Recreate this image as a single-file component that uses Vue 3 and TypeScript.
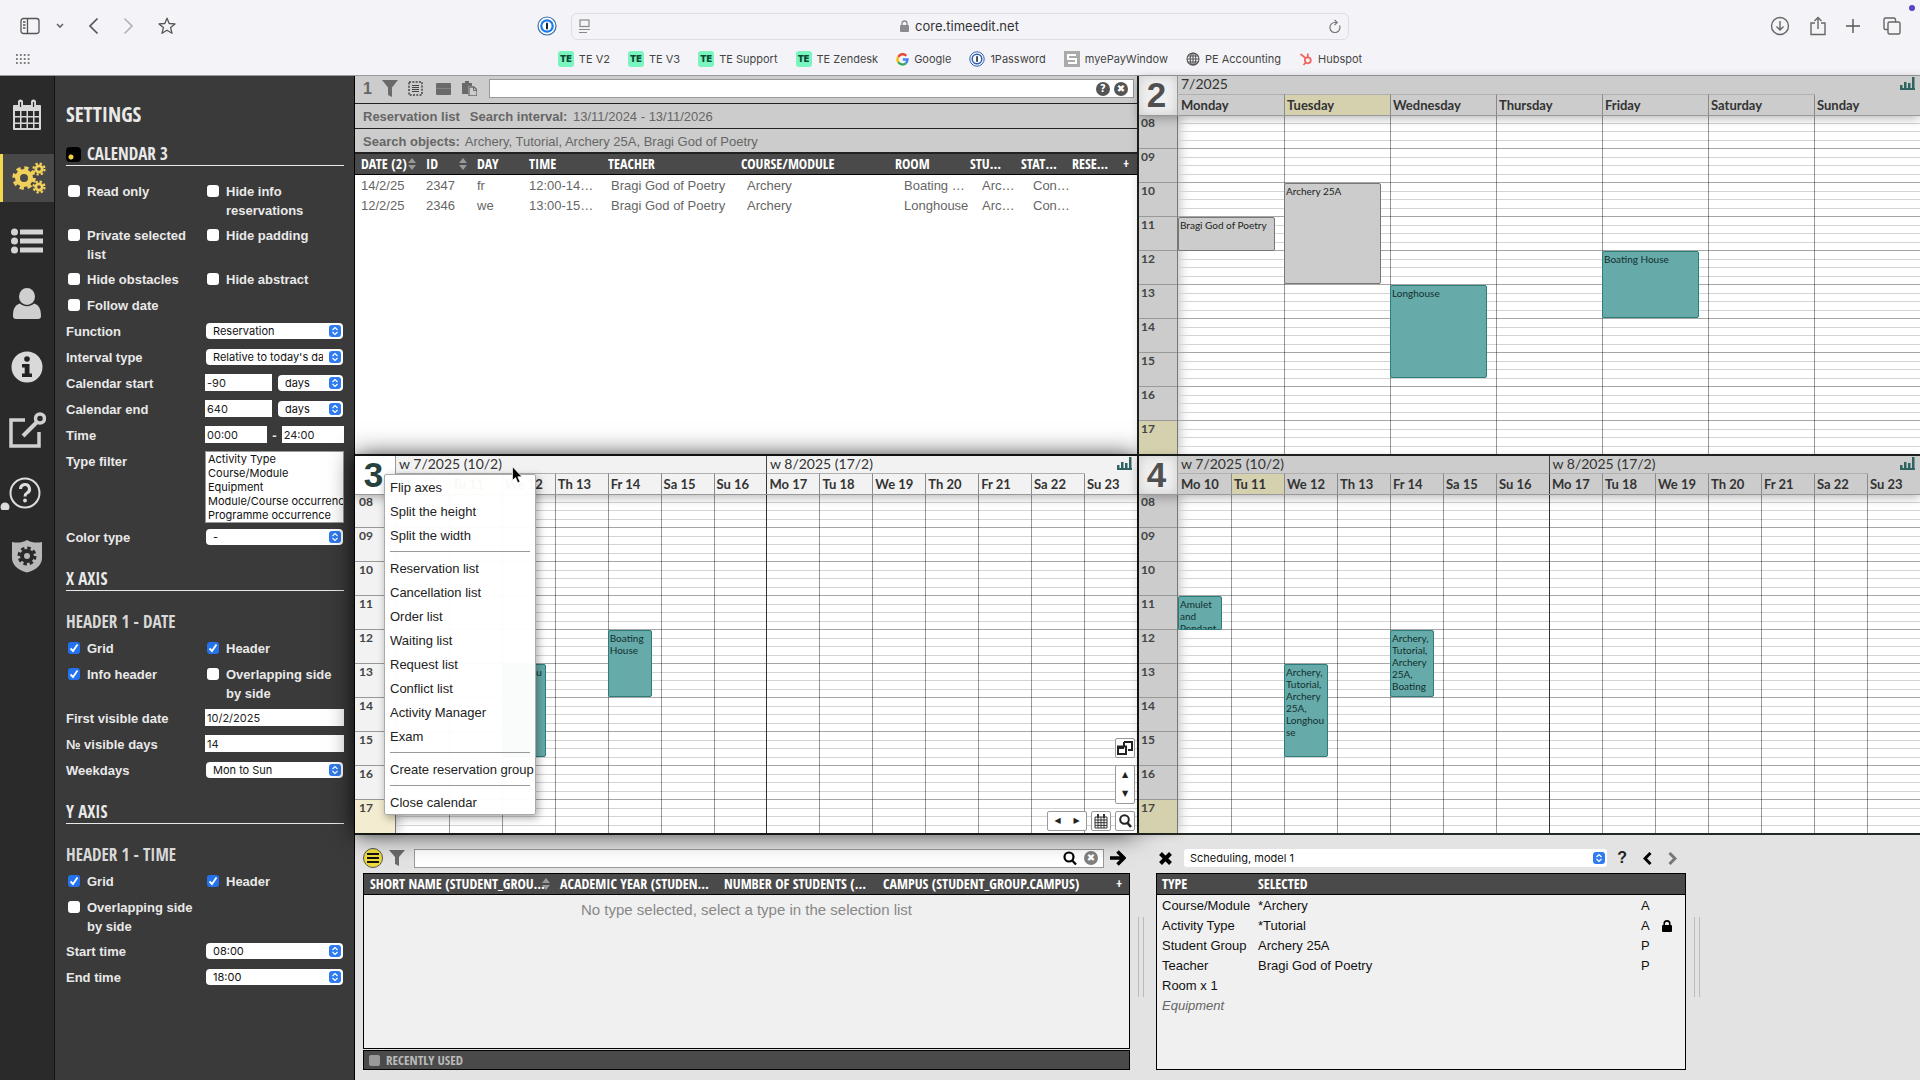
<script setup lang="ts">
interface CalEvent { day: number; start: number; end: number; text: string; grey?: boolean }
interface Calendar {
  num: number
  tone: string
  weeks: string[]
  days: string[]
  today: number
  events: CalEvent[]
}

const hours = ['08', '09', '10', '11', '12', '13', '14', '15', '16', '17']
const twoWeeks = ['Mo 10', 'Tu 11', 'We 12', 'Th 13', 'Fr 14', 'Sa 15', 'Su 16', 'Mo 17', 'Tu 18', 'We 19', 'Th 20', 'Fr 21', 'Sa 22', 'Su 23']
const weekPair = ['w 7/2025 (10/2)', 'w 8/2025 (17/2)']

const calendars: Calendar[] = [
  {
    num: 2, tone: 'dim single', weeks: ['7/2025'],
    days: ['Monday', 'Tuesday', 'Wednesday', 'Thursday', 'Friday', 'Saturday', 'Sunday'], today: 1,
    events: [
      { day: 0, start: 11, end: 12, text: 'Bragi God of Poetry', grey: true },
      { day: 1, start: 10, end: 13, text: 'Archery 25A', grey: true },
      { day: 2, start: 13, end: 15.75, text: 'Longhouse' },
      { day: 4, start: 12, end: 14, text: 'Boating House' },
    ],
  },
  {
    num: 3, tone: 'active', weeks: weekPair, days: twoWeeks, today: 1,
    events: [
      { day: 2, start: 13, end: 15.75, text: 'Longhouse' },
      { day: 4, start: 12, end: 14, text: 'Boating House' },
    ],
  },
  {
    num: 4, tone: 'dim', weeks: weekPair, days: twoWeeks, today: 1,
    events: [
      { day: 0, start: 11, end: 12, text: 'Amulet and Pendant' },
      { day: 2, start: 13, end: 15.75, text: 'Archery, Tutorial, Archery 25A, Longhouse' },
      { day: 4, start: 12, end: 14, text: 'Archery, Tutorial, Archery 25A, Boating' },
    ],
  },
]

function place(e: CalEvent) {
  return { top: (e.start - 8) * 10 + '%', height: (e.end - e.start) * 10 + '%' }
}

const menu = [
  ['Flip axes', 'Split the height', 'Split the width'],
  ['Reservation list', 'Cancellation list', 'Order list', 'Waiting list', 'Request list', 'Conflict list', 'Activity Manager', 'Exam'],
  ['Create reservation group'],
  ['Close calendar'],
]

const reservations = [
  ['14/2/25', '2347', 'fr', '12:00-14…', 'Bragi God of Poetry', 'Archery', 'Boating …', 'Arc…', 'Con…', ''],
  ['12/2/25', '2346', 'we', '13:00-15…', 'Bragi God of Poetry', 'Archery', 'Longhouse', 'Arc…', 'Con…', ''],
]

const selection = [
  { type: 'Course/Module', value: '*Archery', flag: 'A' },
  { type: 'Activity Type', value: '*Tutorial', flag: 'A', locked: true },
  { type: 'Student Group', value: 'Archery 25A', flag: 'P' },
  { type: 'Teacher', value: 'Bragi God of Poetry', flag: 'P' },
  { type: 'Room x 1', value: '', flag: '' },
  { type: 'Equipment', value: '', flag: '', optional: true },
]

const bookmarks = [
  { icon: 'te', label: 'TE V2' },
  { icon: 'te', label: 'TE V3' },
  { icon: 'te', label: 'TE Support' },
  { icon: 'te', label: 'TE Zendesk' },
  { icon: 'google', label: 'Google' },
  { icon: 'onepw', label: '1Password' },
  { icon: 'pay', label: 'myePayWindow' },
  { icon: 'globe', label: 'PE Accounting' },
  { icon: 'hub', label: 'Hubspot' },
]

const flags = [
  { id: 'ro', label: 'Read only' }, { id: 'hi', label: 'Hide info reservations' },
  { id: 'ps', label: 'Private selected list' }, { id: 'hp', label: 'Hide padding' },
  { id: 'ho', label: 'Hide obstacles' }, { id: 'ha', label: 'Hide abstract' },
  { id: 'fd', label: 'Follow date' },
]
const xFlags = [
  { id: 'xg', label: 'Grid', on: true }, { id: 'xh', label: 'Header', on: true },
  { id: 'xi', label: 'Info header', on: true }, { id: 'xo', label: 'Overlapping side by side', on: false },
]
const yFlags = [
  { id: 'yg', label: 'Grid', on: true }, { id: 'yh', label: 'Header', on: true },
  { id: 'yo', label: 'Overlapping side by side', on: false },
]
const typeFilter = ['Activity Type', 'Course/Module', 'Equipment', 'Module/Course occurrence', 'Programme occurrence']
</script>

<template>
  <div class="page">
    <header class="browser">
      <div class="bar">
        <div class="bar-left">
          <button class="ib sidebar-btn" aria-label="Sidebar">
            <svg width="20" height="18" viewBox="0 0 20 18" fill="none" stroke="#555" stroke-width="1.3"><rect x="1" y="1.5" width="18" height="15" rx="2.5" /><path d="M7.5 1.5v15M3 5h2.500M3 8h2.500M3 11h2.500" /></svg>
          </button>
          <button class="ib" aria-label="Tab groups"><svg width="8" height="6" viewBox="0 0 8 6" fill="none" stroke="#666" stroke-width="1.6"><path d="M1 1l3 3 3-3" /></svg></button>
          <button class="ib" aria-label="Back"><svg width="11" height="18" viewBox="0 0 11 18" fill="none" stroke="#555" stroke-width="1.700"><path d="M9.500 1.500L2 9l7.500 7.500" /></svg></button>
          <button class="ib" aria-label="Forward"><svg width="11" height="18" viewBox="0 0 11 18" fill="none" stroke="#b4b4b8" stroke-width="1.700"><path d="M1.500 1.500L9 9l-7.500 7.500" /></svg></button>
          <button class="ib" aria-label="Favourites"><svg width="18" height="18" viewBox="0 0 18 18" fill="none" stroke="#555" stroke-width="1.3" stroke-linejoin="round"><path d="M9 1.200l2.200 5.300 5.800.4-4.400 3.700 1.400 5.700L9 13.200l-5 3.100 1.400-5.700L1 6.900l5.800-.4z" /></svg></button>
          <button class="ib onepw-btn" aria-label="1Password"><svg width="20" height="20" viewBox="0 0 20 20"><circle cx="10" cy="10" r="9" fill="#fff" stroke="#3a6ea5" stroke-width="1.2" /><circle cx="10" cy="10" r="6.800" fill="#1a7cf0" /><circle cx="10" cy="10" r="4.600" fill="#fff" /><rect x="9" y="6.500" width="2" height="7" rx="1" fill="#123" /></svg></button>
        </div>
        <div class="address">
          <svg width="11" height="15" viewBox="0 0 11 15" fill="none" stroke="#888" stroke-width="1.200"><rect x="1" y="1" width="9" height="6.500" /><path d="M0 10.500h11M0 13.500h8" /></svg>
          <span class="url"><svg width="9" height="12" viewBox="0 0 9 12"><rect x="0" y="5" width="9" height="7" rx="1" fill="#8b8b8f" /><path d="M2 5.500V3.500a2.500 2.500 0 0 1 5 0v2" fill="none" stroke="#8b8b8f" stroke-width="1.300" /></svg>core.timeedit.net</span>
          <svg width="12" height="15" viewBox="0 0 12 15" fill="none" stroke="#777" stroke-width="1.200"><path d="M10.500 6.500A5 5 0 1 1 6 3.500h1.500M5.500.8L8.200 3.500 5.500 6.200" /></svg>
        </div>
        <div class="bar-right">
          <svg width="20" height="20" viewBox="0 0 20 20" fill="none" stroke="#666" stroke-width="1.400"><circle cx="10" cy="10" r="8.500" /><path d="M10 5v9M6.500 10.500L10 14l3.500-3.500" /></svg>
          <svg width="16" height="20" viewBox="0 0 16 20" fill="none" stroke="#666" stroke-width="1.400"><path d="M5 7H1v11.500h14V7h-4M8 13V1.500M4.500 5L8 1.500 11.500 5" /></svg>
          <svg class="plus" width="14" height="14" viewBox="0 0 14 14" fill="none" stroke="#555" stroke-width="1.400"><path d="M7 0v14M0 7h14" /></svg>
          <svg width="18" height="18" viewBox="0 0 18 18" fill="none" stroke="#666" stroke-width="1.400"><path d="M5 12.500H2.500A1.500 1.500 0 0 1 1 11V2.500A1.500 1.500 0 0 1 2.500 1H11a1.500 1.500 0 0 1 1.500 1.500V5" /><rect x="5" y="5" width="12" height="12" rx="1.500" /></svg>
        </div>
        <i class="rec-dot"></i>
      </div>
      <nav class="bookmarks">
        <svg class="dots" width="14" height="10" viewBox="0 0 14 10" fill="none" stroke="#555" stroke-width="1.600" stroke-dasharray="1.800 2.100"><path d="M0 1h14M0 5h14M0 9h14" /></svg>
        <a v-for="b in bookmarks" :key="b.label" href="#" class="bm">
          <span v-if="b.icon === 'te'" class="te">TE</span>
          <svg v-else-if="b.icon === 'google'" width="13" height="13" viewBox="0 0 13 13" fill="none" stroke-width="2.400"><path d="M10.300 2.800A5 5 0 0 0 2.300 3.800" stroke="#ea4335" /><path d="M2.300 3.800a5 5 0 0 0 0 5.400" stroke="#fbbc05" /><path d="M2.300 9.200a5 5 0 0 0 7.400 1.100" stroke="#34a853" /><path d="M9.700 10.300A5 5 0 0 0 11.500 6.500H6.800" stroke="#4285f4" /></svg>
          <svg v-else-if="b.icon === 'onepw'" width="16" height="16" viewBox="0 0 16 16"><circle cx="8" cy="8" r="7.200" fill="#fff" stroke="#2f5fb0" /><circle cx="8" cy="8" r="4.800" fill="#fff" stroke="#2f5fb0" stroke-width="1.500" /><rect x="7.200" y="5" width="1.700" height="6" rx=".8" fill="#234" /></svg>
          <svg v-else-if="b.icon === 'pay'" width="16" height="16" viewBox="0 0 16 16"><rect width="16" height="16" fill="#aaa" /><path d="M12 4H4v4h8v4H4" fill="none" stroke="#fff" stroke-width="2" /></svg>
          <svg v-else-if="b.icon === 'globe'" width="14" height="14" viewBox="0 0 14 14" fill="none" stroke="#555" stroke-width="1.100"><circle cx="7" cy="7" r="6" /><ellipse cx="7" cy="7" rx="2.800" ry="6" /><path d="M7 1v12M1 7h12M2 4h10M2 10h10" /></svg>
          <svg v-else width="14" height="14" viewBox="0 0 14 14" fill="none" stroke="#f2625a" stroke-width="1.700"><circle cx="8.800" cy="8.300" r="3" /><path d="M8.800 5.300V1.500M6.600 6.200L1.500 2M6.700 10.500L4.500 13" /></svg>
          {{ b.label }}
        </a>
      </nav>
    </header>

    <div class="app">
      <nav class="rail">
        <button aria-label="Calendar"><svg width="30" height="32" viewBox="0 0 30 32"><path d="M2 6h4V3a2.500 2.500 0 0 1 5 0v3h8V3a2.500 2.500 0 0 1 5 0v3h4a1 1 0 0 1 1 1v23a1 1 0 0 1-1 1H2a1 1 0 0 1-1-1V7a1 1 0 0 1 1-1z" fill="#d8d8d8" /><path d="M8.500 3v5M21.500 3v5" stroke="#2a2a2a" stroke-width="1.200" /><g fill="#2a2a2a"><path d="M3 12h5v5H3zM9.500 12h5v5h-5zM16 12h5v5h-5zM22.500 12h4.500v5h-4.500zM3 18.500h5v5H3zM9.500 18.500h5v5h-5zM16 18.500h5v5h-5zM22.500 18.500h4.500v5h-4.500zM3 25h5v4H3zM9.500 25h5v4h-5zM16 25h5v4h-5zM22.500 25h4.500v4h-4.500z" /></g></svg></button>
        <button class="on" aria-label="Settings"><svg width="34" height="32" viewBox="0 0 34 32" fill="none" stroke="#f0cf5a"><circle cx="12" cy="16" r="6.500" stroke-width="5" /><circle cx="12" cy="16" r="10" stroke-width="3.500" stroke-dasharray="4.200 3.654" /><circle cx="27" cy="7" r="3.200" stroke-width="2.800" /><circle cx="27" cy="7" r="5.500" stroke-width="2.200" stroke-dasharray="2.300 2.020" /><circle cx="27" cy="25" r="3.200" stroke-width="2.800" /><circle cx="27" cy="25" r="5.500" stroke-width="2.200" stroke-dasharray="2.300 2.020" /></svg></button>
        <button aria-label="Lists"><svg width="32" height="26" viewBox="0 0 32 26" fill="#d4d4d4"><circle cx="3.500" cy="4" r="3.500" /><circle cx="3.500" cy="13" r="3.500" /><circle cx="3.500" cy="22" r="3.500" /><path d="M9 1.500h23v5H9zM9 10.500h23v5H9zM9 19.500h23v5H9z" /></svg></button>
        <button aria-label="User"><svg width="30" height="32" viewBox="0 0 30 32" fill="#cfcfcf"><ellipse cx="15" cy="8.500" rx="8" ry="8.500" /><path d="M1 28c0-7 2-11 7-12.500 4 3.500 10 3.500 14 0 5 1.500 7 5.500 7 12.500 0 2-1 3-3 3H4c-2 0-3-1-3-3z" /></svg></button>
        <button aria-label="Information"><svg width="32" height="32" viewBox="0 0 32 32"><circle cx="16" cy="16" r="15.500" fill="#d9d9d9" /><circle cx="16" cy="8" r="2.800" fill="#222" /><path d="M11 13h7.500v9.500H21V26H11v-3.500h2.700v-6H11z" fill="#222" /></svg></button>
        <button aria-label="Open externally"><svg width="38" height="38" viewBox="0 0 38 38" fill="none" stroke="#d0d0d0" stroke-width="3.500"><path d="M17 9H3v26h28V21" /><path d="M15 25L29 11" stroke-width="4" /><circle cx="32" cy="7.500" r="4.500" /></svg></button>
        <button class="help" aria-label="Help"><svg width="42" height="34" viewBox="0 0 42 34" fill="none"><circle cx="25" cy="17" r="14.500" stroke="#ddd" stroke-width="2" /><path d="M20.500 13a4.500 4.500 0 1 1 6.500 4c-1.500.8-2 1.500-2 3.500" stroke="#ddd" stroke-width="3" /><circle cx="25" cy="24.500" r="1.900" fill="#ddd" /><circle cx="5" cy="31" r="4.500" fill="#ddd" /></svg></button>
        <button aria-label="Admin"><svg width="32" height="34" viewBox="0 0 32 34"><path d="M1 3c5 1 10 1 15-2 5 3 10 3 15 2v16c0 7-6 12-15 14.500C7 31 1 26 1 19z" fill="#b8b8b8" /><circle cx="16" cy="17" r="5" fill="none" stroke="#2a2a2a" stroke-width="4" /><circle cx="16" cy="17" r="8" fill="none" stroke="#2a2a2a" stroke-width="3" stroke-dasharray="3.500 2.783" /></svg></button>
      </nav>

      <aside class="settings">
        <h1>SETTINGS</h1>
        <h2><i class="cal-badge"></i>CALENDAR 3</h2>
        <div class="form">
          <label v-for="f in flags" :key="f.id" class="check" :for="f.id"><input :id="f.id" type="checkbox" /><span>{{ f.label }}</span></label>
          <i></i>
          <label for="func">Function</label><select id="func"><option>Reservation</option></select>
          <label for="itype">Interval type</label><select id="itype"><option>Relative to today's date</option></select>
          <label for="cs">Calendar start</label><div class="pair"><input id="cs" type="text" value="-90" /><select aria-label="Start unit"><option>days</option></select></div>
          <label for="ce">Calendar end</label><div class="pair"><input id="ce" type="text" value="640" /><select aria-label="End unit"><option>days</option></select></div>
          <label for="tf">Time</label><div class="pair times"><input id="tf" type="text" value="00:00" /><span>-</span><input type="text" value="24:00" aria-label="Time to" /></div>
          <label for="filter">Type filter</label>
          <select id="filter" class="listbox" multiple size="5"><option v-for="t in typeFilter" :key="t">{{ t }}</option></select>
          <label for="ct">Color type</label><select id="ct"><option>-</option></select>
        </div>
        <h2>X AXIS</h2>
        <h3>HEADER 1 - DATE</h3>
        <div class="form">
          <label v-for="f in xFlags" :key="f.id" class="check" :for="f.id"><input :id="f.id" type="checkbox" :checked="f.on" /><span>{{ f.label }}</span></label>
          <label for="fv">First visible date</label><input id="fv" type="text" value="10/2/2025" />
          <label for="nv">№ visible days</label><input id="nv" type="text" value="14" />
          <label for="wd">Weekdays</label><select id="wd"><option>Mon to Sun</option></select>
        </div>
        <h2>Y AXIS</h2>
        <h3>HEADER 1 - TIME</h3>
        <div class="form">
          <label v-for="f in yFlags" :key="f.id" class="check" :for="f.id"><input :id="f.id" type="checkbox" :checked="f.on" /><span>{{ f.label }}</span></label>
          <i></i>
          <label for="st">Start time</label><select id="st"><option>08:00</option></select>
          <label for="et">End time</label><select id="et"><option>18:00</option></select>
        </div>
      </aside>

      <main class="work">
        <div class="panels">
          <section class="list-panel">
            <div class="tools">
              <b>1</b>
              <svg width="16" height="17" viewBox="0 0 16 17" fill="#6a6a6a"><path d="M0 0h16L10 7.500V17l-4-2V7.500z" /></svg>
              <svg width="15" height="15" viewBox="0 0 15 15" fill="none" stroke="#444"><rect x="1" y="1" width="13" height="13" stroke-width="1.500" stroke-dasharray="2 1.300" /><path d="M4 4.500h7M4 6.500h7M4 8.500h7M4 10.500h7" /></svg>
              <svg class="gap" width="15" height="12" viewBox="0 0 15 12" fill="#6a6a6a"><rect width="15" height="5.500" rx="1" /><rect y="5" width="15" height="7" rx="1" /><path d="M1 5.500h13" stroke="#8a8a8a" stroke-width=".8" /></svg>
              <svg width="15" height="15" viewBox="0 0 15 15"><path d="M0 2h3V0h4v2h3v3H6v8H0z" fill="#6a6a6a" /><path d="M7 6h5l3 3v6H7z" fill="#cbcccb" stroke="#6a6a6a" stroke-width="1.300" /><path d="M11.500 6v3.500H15" fill="none" stroke="#6a6a6a" /></svg>
              <div class="search">
                <input type="text" aria-label="Search" />
                <span class="dot">?</span>
                <span class="dot">✖</span>
              </div>
            </div>
            <p class="info"><b>Reservation list</b><b>Search interval:</b> 13/11/2024 - 13/11/2026</p>
            <p class="info last"><b>Search objects:</b> Archery, Tutorial, Archery 25A, Bragi God of Poetry</p>
            <table class="res">
              <colgroup><col style="width: 65px" /><col style="width: 51px" /><col style="width: 52px" /><col style="width: 79px" /><col style="width: 133px" /><col /><col style="width: 75px" /><col style="width: 51px" /><col style="width: 51px" /><col style="width: 52px" /><col style="width: 19px" /></colgroup>
              <thead><tr>
                <th>DATE (2)<svg class="sort" width="8" height="12" viewBox="0 0 8 12"><path d="M4 0l4 5H0zM0 7h8l-4 5z" /></svg></th>
                <th>ID<svg class="sort" width="8" height="12" viewBox="0 0 8 12"><path d="M4 0l4 5H0zM0 7h8l-4 5z" /></svg></th>
                <th>DAY</th><th>TIME</th><th>TEACHER</th><th>COURSE/MODULE</th><th>ROOM</th><th>STU…</th><th>STAT…</th><th>RESE…</th><th>+</th>
              </tr></thead>
              <tbody><tr v-for="r in reservations" :key="r[1]"><td v-for="(c, i) in r" :key="i" :class="'c' + i">{{ c }}</td><td></td></tr></tbody>
            </table>
          </section>

          <section v-for="cal in calendars" :key="cal.num" class="cal" :class="cal.tone">
            <div class="cal-head">
              <div class="num">{{ cal.num }}</div>
              <div class="heads">
                <div class="weeks">
                  <span v-for="w in cal.weeks" :key="w">{{ w }}</span>
                  <svg class="bars" width="15" height="13" viewBox="0 0 15 13" fill="#2f6460"><path d="M0 8h2.500v4H0zM4 5h2.500v7H4zM8 6h2.500v6H8zM12 0h2.500v12H12zM0 11h15v2H0z" /></svg>
                </div>
                <div class="days">
                  <span v-for="(d, i) in cal.days" :key="d" :class="{ today: i === cal.today, monday: i === 7 }">{{ d }}</span>
                </div>
              </div>
            </div>
            <div class="cal-body">
              <div class="axis"><span v-for="h in hours" :key="h" :class="{ now: h === '17' }">{{ h }}</span></div>
              <div class="grid">
                <div class="lines"><i v-for="n in 40" :key="n"></i></div>
                <div class="cols">
                  <div v-for="(d, i) in cal.days" :key="d" :class="{ monday: i === 7 }">
                    <article v-for="e in cal.events.filter(x => x.day === i)" :key="e.text" class="ev" :class="{ grey: e.grey }" :style="place(e)"><p>{{ e.text }}</p></article>
                  </div>
                </div>
              </div>
            </div>
            <template v-if="cal.num === 3">
              <div class="controls">
                <button class="sq" aria-label="Windows"><svg width="16" height="14" viewBox="0 0 16 14" fill="none" stroke="#222" stroke-width="2"><path d="M7 1h8v8h-4M7 1v4" /><path d="M1 5.500h8v7.500H1z" fill="#fff" /><path d="M1 7h5V5" /></svg></button>
                <div class="vert"><button aria-label="Up">▲</button><button aria-label="Down">▼</button></div>
                <div class="bottom">
                  <div class="horiz"><button aria-label="Previous">◀</button><button aria-label="Next">▶</button></div>
                  <button class="sq" aria-label="Pick date"><svg width="14" height="15" viewBox="0 0 14 15" fill="none" stroke="#333"><path d="M1 3h12v11H1zM1 6h12M1 8.700h12M1 11.400h12M4 3v11M7 3v11M10 3v11" /><path d="M4 0v4M10 0v4" stroke-width="2" /></svg></button>
                  <button class="sq" aria-label="Zoom"><svg width="13" height="14" viewBox="0 0 13 14" fill="none" stroke="#222" stroke-width="2"><circle cx="5.500" cy="5.500" r="4.300" /><path d="M8.500 9l3.500 4" stroke-width="2.500" /></svg></button>
                </div>
              </div>
              <div class="menu" role="menu">
                <template v-for="(group, g) in menu" :key="g">
                  <hr v-if="g > 0" />
                  <button v-for="m in group" :key="m" role="menuitem">{{ m }}</button>
                </template>
              </div>
              <svg class="cursor" width="11" height="18" viewBox="0 0 11 18"><path d="M.5.8v13.500l3-2.800 2.300 5.300 2.200-1-2.200-5h4.200z" fill="#000" stroke="#fff" stroke-width=".7" /></svg>
            </template>
          </section>
        </div>

        <div class="dock">
          <section class="objects">
            <div class="dock-bar">
              <button class="round" aria-label="Menu"><svg width="12" height="10" viewBox="0 0 12 10" stroke="#111" stroke-width="2"><path d="M0 1h12M0 5h12M0 9h12" /></svg></button>
              <svg width="16" height="16" viewBox="0 0 16 16" fill="#6a6a6a"><path d="M0 0h16L10 7v9l-4-2V7z" /></svg>
              <div class="search tall">
                <input type="text" aria-label="Search objects" />
                <svg width="14" height="14" viewBox="0 0 14 14" fill="none" stroke="#000" stroke-width="2.200"><circle cx="6" cy="6" r="4.500" /><path d="M9.200 9.500L13 13.500" /></svg>
                <span class="dot pale">✖</span>
              </div>
              <button class="ib" aria-label="Go"><svg width="16" height="16" viewBox="0 0 16 16" fill="none" stroke="#000" stroke-width="3.400"><path d="M0 8h13M7.500 1.500L14 8l-6.500 6.500" /></svg></button>
            </div>
            <div class="box">
              <table class="objs">
                <colgroup><col style="width: 190px" /><col style="width: 164px" /><col style="width: 159px" /><col /><col style="width: 18px" /></colgroup>
                <thead><tr>
                  <th>SHORT NAME (STUDENT_GROU…<svg class="sort" width="8" height="12" viewBox="0 0 8 12"><path d="M4 0l4 5H0zM0 7h8l-4 5z" /></svg></th>
                  <th>ACADEMIC YEAR (STUDEN…</th><th>NUMBER OF STUDENTS (…</th><th>CAMPUS (STUDENT_GROUP.CAMPUS)</th><th>+</th>
                </tr></thead>
              </table>
              <p class="empty">No type selected, select a type in the selection list</p>
            </div>
            <div class="recent"><i></i>RECENTLY USED</div>
          </section>
          <div class="split"></div>
          <section class="model">
            <div class="dock-bar">
              <button class="ib" aria-label="Clear"><svg width="13" height="13" viewBox="0 0 13 13" stroke="#000" stroke-width="4"><path d="M1.500 1.500l10 10M11.500 1.500l-10 10" /></svg></button>
              <select class="model-select" aria-label="Model"><option>Scheduling, model 1</option></select>
              <button class="ib q" aria-label="Help">?</button>
              <button class="ib" aria-label="Previous"><svg width="9" height="13" viewBox="0 0 9 13" fill="none" stroke="#000" stroke-width="3"><path d="M7.500 1L2 6.500 7.500 12" /></svg></button>
              <button class="ib next" aria-label="Next"><svg width="9" height="13" viewBox="0 0 9 13" fill="none" stroke="#777" stroke-width="3"><path d="M1.500 1L7 6.500 1.500 12" /></svg></button>
            </div>
            <div class="box">
              <table class="sel">
                <colgroup><col style="width: 95px" /><col /><col style="width: 21px" /><col style="width: 29px" /></colgroup>
                <thead><tr><th>TYPE</th><th>SELECTED</th><th></th><th></th></tr></thead>
                <tbody>
                  <tr v-for="s in selection" :key="s.type" :class="{ optional: s.optional }">
                    <td>{{ s.type }}</td><td>{{ s.value }}</td><td>{{ s.flag }}</td>
                    <td><svg v-if="s.locked" width="10" height="12" viewBox="0 0 10 12"><rect y="5" width="10" height="7" rx="1" /><path d="M2.200 6V3.700a2.800 2.800 0 0 1 5.600 0V6" fill="none" stroke="#000" stroke-width="1.600" /></svg></td>
                  </tr>
                </tbody>
              </table>
            </div>
          </section>
          <div class="split"></div>
        </div>
      </main>
    </div>
  </div>
</template>

<style>
body { margin: 0; }
</style>

<style scoped>
* { box-sizing: border-box; }
p, h1, h2, h3 { margin: 0; }
svg { display: block; flex: none; }
button { padding: 0; border: 0; background: none; font: inherit; color: inherit; display: flex; align-items: center; justify-content: center; }
input, select { font-family: Inter, "Liberation Sans", sans-serif; }

.page { min-height: 100vh; display: flex; flex-direction: column; font-family: "Liberation Sans", Arial, sans-serif; font-size: 13px; background: #e3e3e3; }

.browser { background: #f4f4f8; border-bottom: 1px solid #9b9b9d; height: 76px; display: flex; flex-direction: column; font-family: Inter, sans-serif; color: #444; }
.bar { position: relative; display: grid; grid-template-columns: 1fr 778px 1fr; align-items: center; height: 52px; }
.bar-left, .bar-right { display: flex; align-items: center; }
.bar-left { padding: 0 14px 0 20px; gap: 24px; }
.sidebar-btn { margin-right: -8px; }
.onepw-btn { margin-left: auto; }
.bar-right { justify-content: flex-end; gap: 20px; padding-right: 19px; }
.plus { margin-right: 3px; }
.address { height: 27px; padding: 0 7px; border: 1px solid #dedee2; border-radius: 6px; display: flex; align-items: center; justify-content: space-between; }
.url { display: flex; align-items: center; gap: 6px; font-size: 13px; color: #333; }
.rec-dot { position: absolute; right: 5px; top: 5px; width: 6px; height: 6px; border-radius: 50%; background: #5b3fc4; }
.bookmarks { position: relative; display: flex; justify-content: center; gap: 18px; height: 14px; font-size: 11px; }
.dots { position: absolute; left: 16px; top: 2px; }
.bm { display: flex; align-items: center; gap: 5px; color: #444; text-decoration: none; }
.te { width: 16px; height: 16px; border-radius: 3px; background: #7af5c0; color: #0a4a30; font-size: 9px; font-weight: 900; line-height: 16px; text-align: center; }

.app { flex: 1; display: flex; }
.rail { width: 55px; background: #2a2a2a; border-right: 1px solid #111; padding-top: 8px; display: flex; flex-direction: column; align-items: stretch; }
.rail button { height: 48px; margin: 7px 0 8px; border-left: 3px solid transparent; padding-right: 3px; }
.rail .on { background: #484848; border-color: #f4d94e; padding-right: 0; }
.rail .help { padding-right: 15px; }

.settings { width: 300px; background: #3a3a3a; border-right: 1px solid #000; color: #e9e9e9; padding: 26px 10px 0 11px; font-size: 13px; font-weight: bold; }
h1, h2, h3, th, .recent { font-family: "Open Sans Condensed", "Roboto Condensed", "Liberation Sans Narrow", "Open Sans", sans-serif; font-weight: bold; }
h1 { font-size: 21px; line-height: 25px; }
h2 { display: flex; align-items: center; gap: 6px; font-size: 17px; line-height: 22px; border-bottom: 1px solid #e9e9e9; margin-top: 17px; }
h1 + h2 { margin-top: 16px; margin-bottom: 13px; }
h3 { font-size: 17px; line-height: 22px; margin: 20px 0 3px; color: #d8d8d8; }
.cal-badge { width: 15px; height: 15px; border-radius: 4px; background: radial-gradient(circle at 5px 10px, #f5d33b 2px, #000 3px); }
.form { display: grid; grid-template-columns: 139px 139px; line-height: 19px; }
.form > * { min-height: 26px; }
.form > label { padding: 3px 0; }
.check { display: flex; gap: 7px; }
.check input { appearance: none; flex: none; margin: 3px 0 0 2px; width: 12px; height: 12px; border-radius: 3px; background: #fff; }
.check input:checked { background: #2473ee url("data:image/svg+xml,%3Csvg xmlns='http://www.w3.org/2000/svg' viewBox='0 0 12 12' fill='none' stroke='white' stroke-width='1.8'%3E%3Cpath d='M2.500 6.500l2.500 2.500 4.500-6.500'/%3E%3C/svg%3E"); }
.settings input[type="text"] { width: 100%; height: 17px; min-height: 17px; align-self: start; margin: 3px 0 0; border: 1px solid #fff; padding: 0 1px; background: #fff; font-size: 11px; color: #222; }
.settings select, .model-select { appearance: none; width: 137px; min-height: 16px; height: 16px; margin: 4px 1px 0; border: 0; border-radius: 4px; padding: 0 20px 0 7px; font-size: 11px; color: #111; background: #fff url("data:image/svg+xml,%3Csvg xmlns='http://www.w3.org/2000/svg' width='12' height='12' viewBox='0 0 12 12'%3E%3Crect width='12' height='12' rx='3' fill='%232f7cf0'/%3E%3Cpath d='M3.500 5L6 2.500 8.500 5M3.500 7L6 9.500 8.500 7' fill='none' stroke='white' stroke-width='1.200'/%3E%3C/svg%3E") no-repeat right 2px center; }
.pair { display: flex; gap: 5px; }
.pair select { width: 65px; flex: none; }
.pair input { flex: 1; min-width: 0; }
.pair.times { line-height: 26px; }
.settings .listbox { width: 139px; height: 72px; margin: 2px 0; border: 1px solid #999; border-radius: 0; padding: 0; background: #fff; overflow: hidden; }
.listbox option { padding: 0 2px; min-height: 14px; height: 14px; line-height: 14px; }

.work { flex: 1; min-width: 0; display: flex; flex-direction: column; }
.panels { display: grid; grid-template-columns: 782fr 781fr; gap: 2px; background: #1f221f; border-bottom: 2px solid #242a24; }
.list-panel { background: #fff; color: #666; min-width: 0; }
.tools { display: flex; align-items: center; gap: 10px; height: 28px; padding: 0 3px 2px 8px; background: #cbcccb; border-bottom: 1px solid #222; font-size: 16px; }
.tools .gap { margin: 0 1px 0 3px; }
.search { flex: 1; height: 19px; margin-left: 2px; padding-right: 5px; display: flex; align-items: center; gap: 4px; background: #fff; border: 1px solid #999; }
.search.tall { margin-left: 3px; gap: 7px; }
.search input { flex: 1; min-width: 0; border: 0; padding: 0; background: none; height: 16px; }
.dot { width: 14px; height: 14px; border-radius: 50%; background: #555; color: #fff; font: bold 10px/14px "DejaVu Sans", sans-serif; text-align: center; }
.dot.pale { background: #808080; }
.info { height: 25px; line-height: 25px; padding-left: 8px; background: #cbcccb; border-bottom: 1px solid #222; }
.info b { margin-right: 10px; }
.info b:nth-last-child(1) { margin-right: 2px; }
.info.last { border-bottom-width: 2px; }
table { width: 100%; border-collapse: collapse; table-layout: fixed; }
th { position: relative; height: 20px; padding: 0 0 0 6px; text-align: left; font-size: 14px; line-height: 20px; background: #4a4a4a; color: #fff; white-space: nowrap; overflow: hidden; }
thead { border-bottom: 1px solid #000; }
.sort { position: absolute; right: 4px; top: 4px; fill: #999; }
td { height: 20px; padding: 0 0 0 6px; line-height: 20px; white-space: nowrap; overflow: hidden; }
.res tbody { color: #666; }
.res th:last-child, .objs th:last-child { padding-left: 5px; }
.res .c4 { padding-left: 9px; }
.res .c5 { padding-left: 12px; }
.res .c6 { padding-left: 15px; overflow: visible; }
.res .c7, .res .c8 { padding-left: 18px; overflow: visible; }
.res tbody tr:first-child td { height: 21px; padding-top: 1px; }

.cal { position: relative; min-width: 0; background: #fff; font-family: Lato, sans-serif; color: #333; z-index: 2; }
.cal.active { z-index: 1; box-shadow: 0 0 24px rgba(0, 0, 0, .8); }
.cal-head { position: relative; z-index: 1; display: flex; height: 38px; background: #f2f2f2; box-shadow: 0 1px 0 #999, 0 3px 10px rgba(0, 0, 0, .3); }
.single .cal-head { height: 39px; }
.dim .cal-head { background: #cbcccb; }
.num { width: 41px; padding-right: 3px; border-right: 1px solid #999; text-align: center; font: bold 35px/38px "Liberation Sans", sans-serif; color: #26423f; background: #fff; }
.dim .num { width: 39px; color: #505050; background: #f0f0f0; box-shadow: inset 0 0 12px #cbcccb; }
.heads { flex: 1; min-width: 0; display: flex; flex-direction: column; }
.weeks { position: relative; display: flex; height: 17px; font-size: 14px; line-height: 16px; }
.single .weeks { height: 18px; }
.weeks span { flex: 1; padding-left: 3px; }
.weeks span + span { border-left: 1px solid #444; }
.bars { position: absolute; right: 5px; top: 1px; }
.days { flex: 1; display: flex; font-size: 13px; font-weight: bold; line-height: 20px; }
.days span { flex: 1 1 0; min-width: 0; padding-left: 2px; border-left: 1px solid #8a8a8a; border-top: 1px solid #b0b0b0; white-space: nowrap; }
.days span:first-child { border-left-color: transparent; }
.days span:last-child { border-top-color: transparent; }
.days .today { background: #f3ecd0; }
.dim .days .today { background: #d5d0ad; }
.cal-body { display: flex; height: 339px; }
.axis { width: 41px; display: flex; flex-direction: column; background: #f2f2f2; border-right: 1px solid #777; box-shadow: 2px 0 10px rgba(0, 0, 0, .25); font-size: 12px; font-weight: bold; color: #444; }
.dim .axis { width: 39px; background: #cbcccb; }
.axis span { flex: 1 1 0; min-height: 0; padding-left: 4px; line-height: 15px; border-bottom: 1px solid #999; }
.dim .axis span { padding-left: 2px; }
.axis .now { background: #f3ecd0; border-bottom: 0; }
.dim .axis .now { background: #d5d0ad; }
.grid { flex: 1; min-width: 0; display: grid; }
.lines, .cols { grid-area: 1 / 1; display: flex; }
.lines { flex-direction: column; }
.lines i { flex: 1 1 0; border-bottom: 1px solid #d4d4d4; }
.lines i:nth-child(4n) { border-bottom-color: #a6a6a6; }
.lines i:last-child { border-bottom: 0; }
.cols > div { position: relative; flex: 1 1 0; min-width: 0; border-left: 1px solid rgba(0, 0, 0, .4); }
.cols > div:first-child { border-left-color: transparent; }
.cols > .monday, .days .monday { border-left-color: #333; }
.ev { position: absolute; left: -1px; width: calc(100% - 8px); padding: 1px 0 0 1px; overflow: hidden; background: #66aaa9; border: 1px solid #2c7c7a; border-radius: 2px; font-size: 10px; line-height: 12px; color: #12302f; }
.ev.grey { background: #cbcccb; border-color: #777; color: #222; }
.ev p { word-break: break-word; }
.controls { position: absolute; right: 2px; bottom: 2px; display: flex; flex-direction: column; align-items: flex-end; gap: 7px; }
.bottom { display: flex; gap: 4px; }
.sq, .vert, .horiz { width: 20px; height: 20px; background: #fff; border: 1px solid #999; border-radius: 2px; }
.vert { height: 39px; display: flex; flex-direction: column; justify-content: space-around; }
.horiz { width: 40px; display: flex; justify-content: space-around; align-items: center; }
.vert button, .horiz button { font: 8px/10px "DejaVu Sans", sans-serif; color: #222; }
.menu { position: absolute; z-index: 3; left: 29px; top: 18px; width: 152px; padding: 0 5px; background: rgba(255, 255, 255, .97); border: 1px solid #aaa; border-radius: 2px; box-shadow: 2px 3px 8px rgba(0, 0, 0, .35); font-family: "Liberation Sans", Arial, sans-serif; font-size: 13px; color: #222; }
.menu button { height: 24px; white-space: nowrap; justify-content: flex-start; }
.menu hr { margin: 4px 0; border: 0; height: 1px; background: #999; }
.cursor { position: absolute; z-index: 4; left: 157px; top: 10px; }

.dock { flex: 1; display: flex; padding: 12px 0 10px 8px; color: #222; }
.objects { flex: 0 1 767px; display: flex; flex-direction: column; }
.model { flex: 0 1 530px; display: flex; flex-direction: column; }
.dock-bar { display: flex; align-items: center; gap: 6px; height: 22px; margin-bottom: 4px; }
.objects .dock-bar { padding-right: 4px; }
.round { flex: none; width: 20px; height: 20px; border-radius: 50%; background: #efdc3c; border: 1px solid #555; }
.box { flex: 1; border: 1px solid #000; background: #f0f0f0; }
.objs th { overflow: visible; }
.empty { text-align: center; font-size: 15px; line-height: 30px; color: #888; }
.recent { display: flex; align-items: center; gap: 6px; height: 20px; margin-top: 1px; padding-left: 5px; border: 1px solid #000; background: #4a4a4a; color: #bbb; font-size: 13px; }
.recent i { width: 11px; height: 11px; background: #999; border-radius: 2px; }
.split { flex: none; width: 6px; height: 80px; margin: 70px 12px 0 8px; border: 1px solid #bbb; border-width: 0 1px; }
.model .dock-bar { padding: 0 9px 0 3px; gap: 12px; }
.next { margin-left: 4px; }
.model-select { flex: 1; min-width: 0; height: 18px; margin: 0; border-radius: 3px; padding-left: 6px; }
.q { margin: 0 4px 0 -2px; font: bold 16px/20px "Liberation Sans", sans-serif; }
.sel { color: #111; }
.sel tbody tr:first-child td { height: 21px; padding-top: 1px; }
.sel th:first-child, .sel td:first-child { padding-left: 5px; }
.optional { font-style: italic; color: #666; }
</style>
